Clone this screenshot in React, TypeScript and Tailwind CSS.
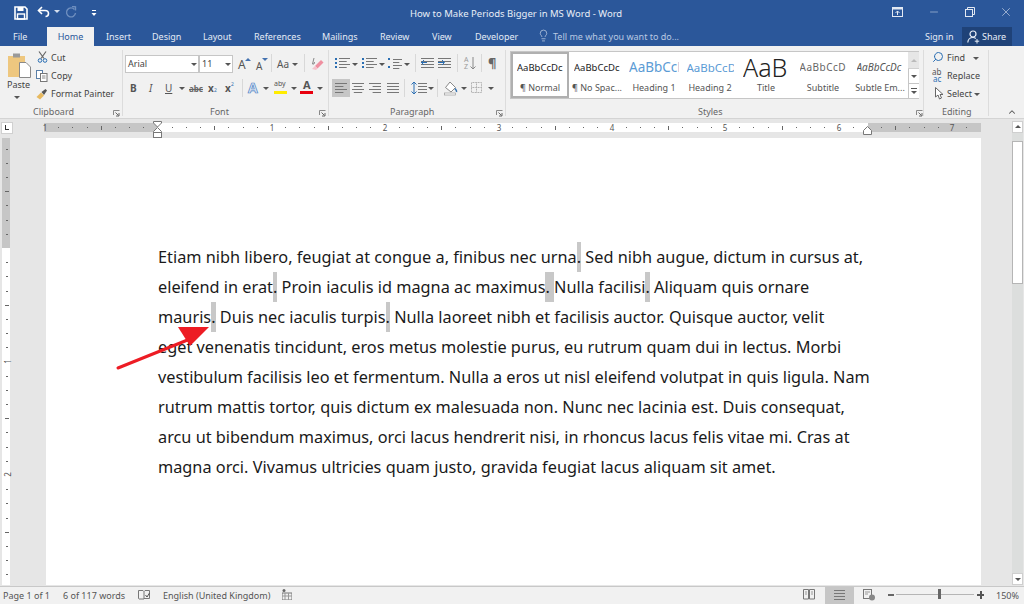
import type { ReactNode } from "react"
import { ChevronUp, Lightbulb, Search, X, Minus } from "lucide-react"

// small drop-down arrow used all over the ribbon
function Caret({ x, y, color = "border-t-[#555]" }: { x: number; y: number; color?: string }) {
  return (
    <span
      className={`absolute w-0 h-0 border-l-[3px] border-r-[3px] border-t-[3px] border-l-transparent border-r-transparent ${color}`}
      style={{ left: x, top: y }}
    />
  )
}

function Label({ x, y, children, className = "text-[#444]" }: { x: number; y: number; children: ReactNode; className?: string }) {
  return (
    <span className={`absolute whitespace-nowrap text-[9px] leading-[12px] ${className}`} style={{ left: x, top: y }}>
      {children}
    </span>
  )
}

function Launcher({ x }: { x: number }) {
  return (
    <svg className="absolute" style={{ left: x, top: 110 }} width="7" height="7" viewBox="0 0 7 7">
      <path d="M0.5 5V0.5H6.5" fill="none" stroke="#888" />
      <path d="M2.5 2.5L5.5 5.5M6 3V6H3" fill="none" stroke="#666" />
    </svg>
  )
}

function Tab({ x, label }: { x: number; label: string }) {
  return (
    <span className="absolute top-[30px] text-[9px] leading-[13px] text-[#e4ebf5] whitespace-nowrap" style={{ left: x }}>
      {label}
    </span>
  )
}

function Lines({ x, y, w, align = "left" }: { x: number; y: number; w: number; align?: "left" | "center" | "right" | "full" }) {
  const rows = [w, w * 0.7, w, w * 0.7]
  return (
    <svg className="absolute" style={{ left: x, top: y }} width={w} height="11" viewBox={`0 0 ${w} 11`}>
      {rows.map((len, i) => {
        const l = align === "full" ? w : len
        const sx = align === "center" || align === "full" ? (w - l) / 2 : align === "right" ? w - l : 0
        return <rect key={i} x={sx} y={i * 3} width={l} height="1" fill="#777" />
      })}
    </svg>
  )
}

function StyleCell({ x, w, sample, name, sampleClass }: { x: number; w: number; sample: string; name: string; sampleClass: string }) {
  return (
    <div className="absolute top-0 h-[44px] w-[56px]" style={{ left: x }}>
      <div className={`mx-auto h-[29px] leading-[29px] overflow-hidden whitespace-nowrap ${sampleClass}`} style={{ width: w }}>{sample}</div>
      <div className="text-center text-[9px] leading-[12px] text-[#555] whitespace-nowrap">{name}</div>
    </div>
  )
}

function HRuler() {
  const marks = []
  const zero = 157.5
  const inch = 113.5
  for (let i = -8; i <= 66; i++) {
    const px = zero + (i * inch) / 8
    if (px < 46 || px > 980) continue
    if (i % 8 === 0) continue
    marks.push(
      <span
        key={i}
        className="absolute bg-[#666] w-px"
        style={{ left: Math.round(px), top: i % 4 === 0 ? 126 : 127, height: i % 4 === 0 ? 4 : 1 }}
      />
    )
  }
  const nums = [
    [44, "1"],
    [271, "1"],
    [384, "2"],
    [498, "3"],
    [611, "4"],
    [724, "5"],
    [838, "6"],
    [951, "7"],
  ] as const
  return (
    <>
      <div className="absolute left-[44px] top-[123px] w-[937px] h-[9px] bg-white" />
      <div className="absolute left-[44px] top-[123px] w-[113px] h-[9px] bg-[#c6c6c6]" />
      <div className="absolute left-[868px] top-[123px] w-[113px] h-[9px] bg-[#c6c6c6]" />
      {marks}
      {nums.map(([x, n], i) => (
        <span key={i} className="absolute top-[122px] w-[6px] -ml-[3px] text-center text-[8px] leading-[11px] text-[#555]" style={{ left: x + 1 }}>
          {n}
        </span>
      ))}
      {/* indent markers */}
      <svg className="absolute left-[152px] top-[120px]" width="11" height="19" viewBox="0 0 11 19">
        <path d="M1.5 1.5H9.5V3L5.5 7L1.5 3Z" fill="#fff" stroke="#777" />
        <path d="M5.5 7.5L9.5 11.5V12.5H1.5V11.5Z" fill="#fff" stroke="#777" />
        <rect x="1.5" y="12.5" width="8" height="5" fill="#fff" stroke="#777" />
      </svg>
      <svg className="absolute left-[862px] top-[126px]" width="11" height="10" viewBox="0 0 11 10">
        <path d="M5.5 0.5L9.5 4.5V8.5H1.5V4.5Z" fill="#fff" stroke="#777" />
      </svg>
    </>
  )
}

function VRuler() {
  const ticks = []
  const zero = 248
  const inch = 113.5
  for (let i = -7; i <= 23; i++) {
    const py = Math.round(zero + (i * inch) / 8)
    if (py > 584 || i % 8 === 0) continue
    const long = i % 4 === 0
    ticks.push(
      <span key={i} className="absolute bg-[#666] h-px" style={{ top: py, left: long ? 5 : 6, width: long ? 4 : 2 }} />
    )
  }
  return (
    <>
      <div className="absolute left-[2px] top-[138px] w-[8px] h-[447px] bg-white" />
      <div className="absolute left-[2px] top-[138px] w-[8px] h-[110px] bg-[#c6c6c6]" />
      {ticks}
      <span className="absolute left-[3px] top-[356px] w-[8px] text-center text-[8px] leading-[11px] text-[#555] -rotate-90">1</span>
      <span className="absolute left-[3px] top-[469px] w-[8px] text-center text-[8px] leading-[11px] text-[#555] -rotate-90">2</span>
    </>
  )
}

function Dot({ wide = false }: { wide?: boolean }) {
  return (
    <span className={`inline-block h-[30px] align-top bg-[#c8c8c8] ${wide ? "whitespace-pre" : ""}`}>{wide ? ". " : "."}</span>
  )
}

export default function App() {
  return (
    <div className="relative w-[1024px] h-[604px] overflow-hidden bg-[#e6e6e6] font-['Open_Sans']">
      {/* Title bar */}
      <div className="absolute inset-x-0 top-0 h-[46px] bg-[#2b579a]" />
      <svg className="absolute left-[14px] top-[6px]" width="14" height="14" viewBox="0 0 14 14">
        <path d="M1 1H11L13 3V13H1Z" fill="none" stroke="#fff" strokeWidth="1.6" />
        <rect x="3.5" y="1" width="6" height="4" fill="#fff" />
        <rect x="3.5" y="8" width="7" height="5" fill="none" stroke="#fff" strokeWidth="1.4" />
      </svg>
      <svg className="absolute left-[37px] top-[6px]" width="13" height="13" viewBox="0 0 13 13">
        <path d="M5 1L1.5 4.5L5 8" fill="none" stroke="#fff" strokeWidth="1.6" />
        <path d="M2 4.5H8C10.5 4.5 11.5 6 11.5 7.5C11.5 9.5 10 10.5 8.5 10.5" fill="none" stroke="#fff" strokeWidth="1.6" />
      </svg>
      <Caret x={54} y={10} color="border-t-[#d5dfee]" />
      <svg className="absolute left-[65px] top-[6px]" width="12" height="13" viewBox="0 0 12 13">
        <path d="M9.5 3.5A4.5 4.5 0 1 0 10.5 7" fill="none" stroke="#6f8fbf" strokeWidth="1.4" />
        <path d="M7 0.5L10.5 0.8V4.5" fill="none" stroke="#6f8fbf" strokeWidth="1.4" />
      </svg>
      <svg className="absolute left-[91px] top-[10px]" width="6" height="7" viewBox="0 0 6 7">
        <rect x="1" y="0" width="4" height="1" fill="#fff" />
        <path d="M0.5 3H5.5L3 6Z" fill="#fff" />
      </svg>
      <div className="absolute left-[410px] top-[7px] text-[9.5px] leading-[14px] text-[#e8eef7] whitespace-nowrap">
        How to Make Periods Bigger in MS Word - Word
      </div>

      {/* Window buttons */}
      <svg className="absolute left-[892px] top-[7px]" width="11" height="10" viewBox="0 0 11 10">
        <rect x="0.5" y="0.5" width="10" height="9" fill="none" stroke="#e3e9f3" />
        <rect x="0.5" y="0.5" width="10" height="2" fill="#e3e9f3" />
        <path d="M5.5 8V4M3.5 6L5.5 4L7.5 6" fill="none" stroke="#e3e9f3" />
      </svg>
      <Minus className="absolute left-[928px] top-[6px] text-[#e3e9f3]" size={12} strokeWidth={1} />
      <svg className="absolute left-[965px] top-[7px]" width="10" height="10" viewBox="0 0 10 10">
        <rect x="0.5" y="2.5" width="7" height="7" fill="none" stroke="#e3e9f3" />
        <path d="M2.5 2.5V0.5H9.5V7.5H7.5" fill="none" stroke="#e3e9f3" />
      </svg>
      <X className="absolute left-[999px] top-[5px] text-[#e3e9f3]" size={14} strokeWidth={1} />

      {/* Tabs */}
      <Tab x={13} label="File" />
      <div className="absolute left-[47px] top-[27px] w-[47px] h-[19px] bg-[#f1f1f1] text-center text-[9px] leading-[19px] text-[#2b579a]">Home</div>
      <Tab x={106} label="Insert" />
      <Tab x={152} label="Design" />
      <Tab x={203} label="Layout" />
      <Tab x={254} label="References" />
      <Tab x={322} label="Mailings" />
      <Tab x={380} label="Review" />
      <Tab x={432} label="View" />
      <Tab x={475} label="Developer" />
      <Lightbulb className="absolute left-[537px] top-[29px] text-[#d5dfee]" size={13} strokeWidth={1.2} />
      <span className="absolute left-[553px] top-[30px] text-[9px] leading-[13px] text-[#b9c9e2] whitespace-nowrap">Tell me what you want to do...</span>
      <Tab x={925} label="Sign in" />
      <div className="absolute left-[962px] top-[27px] w-[50px] h-[19px] bg-[#1f4278]" />
      <svg className="absolute left-[967px] top-[30px]" width="13" height="14" viewBox="0 0 13 14">
        <circle cx="6" cy="4" r="3" fill="none" stroke="#e8eef7" strokeWidth="1.2" />
        <path d="M0.8 12.5C1 9.5 3 7.5 6 7.5C7 7.5 8 7.8 8.8 8.4" fill="none" stroke="#e8eef7" strokeWidth="1.2" />
        <path d="M10 9V13.5M7.8 11.2H12.2" stroke="#e8eef7" />
      </svg>
      <span className="absolute left-[982px] top-[30px] text-[9px] leading-[13px] text-[#e8eef7]">Share</span>

      {/* Ribbon */}
      <div className="absolute inset-x-0 top-[46px] h-[73px] bg-[#f1f1f1] border-b border-[#d4d4d4]" />
      {[122, 328, 505, 923, 988].map((x) => (
        <div key={x} className="absolute top-[50px] w-px h-[66px] bg-[#dcdcdc]" style={{ left: x }} />
      ))}

      {/* Clipboard */}
      <svg className="absolute left-[8px] top-[52px]" width="23" height="26" viewBox="0 0 23 26">
        <rect x="0" y="4" width="17" height="21" fill="#eec77f" />
        <rect x="5" y="1.5" width="7" height="4" fill="#9a9a9a" />
        <path d="M11.5 10.5H18L22.5 15V25.5H11.5Z" fill="#fff" stroke="#8a8a8a" />
      </svg>
      <Label x={7} y={79}>Paste</Label>
      <Caret x={14} y={96} />
      <svg className="absolute left-[37px] top-[51px]" width="11" height="12" viewBox="0 0 11 12">
        <path d="M2 0.5L7 7.5M9 0.5L4 7.5" stroke="#666" strokeWidth="1.2" fill="none" />
        <circle cx="3" cy="9.5" r="1.8" fill="none" stroke="#2b6fb3" />
        <circle cx="8" cy="9.5" r="1.8" fill="none" stroke="#2b6fb3" />
      </svg>
      <Label x={51} y={52}>Cut</Label>
      <svg className="absolute left-[36px] top-[70px]" width="12" height="12" viewBox="0 0 12 12">
        <rect x="0.5" y="0.5" width="6" height="8" fill="#fff" stroke="#5a7fa8" />
        <rect x="4.5" y="3.5" width="6.5" height="8" fill="#fff" stroke="#777" />
        <path d="M6 6H9.5M6 8H9.5" stroke="#888" />
      </svg>
      <Label x={51} y={70}>Copy</Label>
      <svg className="absolute left-[36px] top-[88px]" width="13" height="12" viewBox="0 0 13 12">
        <path d="M0.5 9L5 4.5L8 7.5L4 11.5Z" fill="#e7b95f" />
        <path d="M5.5 4L9.5 1L11 2.5L8 7Z" fill="#555" />
      </svg>
      <Label x={51} y={88}>Format Painter</Label>
      <Label x={33} y={106} className="text-[#666]">Clipboard</Label>
      <Launcher x={113} />

      {/* Font */}
      <div className="absolute left-[125px] top-[55px] w-[74px] h-[18px] bg-white border border-[#c6c6c6] pl-[2px] text-[9px] leading-[16px] text-[#444]">Arial</div>
      <Caret x={191} y={63} />
      <div className="absolute left-[199px] top-[55px] w-[34px] h-[18px] bg-white border border-[#c6c6c6] pl-[2px] text-[9px] leading-[16px] text-[#444]">11</div>
      <Caret x={225} y={63} />
      <span className="absolute left-[238px] top-[58px] text-[12px] leading-[14px] text-[#555] font-['Liberation_Sans']">A</span>
      <Caret x={245} y={58} color="border-t-[#4472b0] rotate-180" />
      <span className="absolute left-[256px] top-[60px] text-[10px] leading-[12px] text-[#555] font-['Liberation_Sans']">A</span>
      <Caret x={262} y={58} color="border-t-[#4472b0]" />
      <div className="absolute left-[271px] top-[54px] w-px h-[18px] bg-[#d8d8d8]" />
      <span className="absolute left-[277px] top-[58px] text-[10px] leading-[13px] text-[#555] font-['Liberation_Sans']">Aa</span>
      <Caret x={292} y={63} />
      <div className="absolute left-[304px] top-[54px] w-px h-[18px] bg-[#d8d8d8]" />
      <svg className="absolute left-[311px] top-[57px]" width="13" height="14" viewBox="0 0 13 14">
        <path d="M3 1L1.5 7H3L3.5 5" fill="none" stroke="#888" />
        <path d="M4 9L10 3L12.5 5.5L6.5 11.5Z" fill="#ef8fa0" />
        <path d="M1 12L4 9L6.5 11.5L5 13Z" fill="#f4c3cc" />
      </svg>
      <span className="absolute left-[130px] top-[82px] text-[10px] leading-[12px] font-bold text-[#555] font-['Liberation_Sans']">B</span>
      <span className="absolute left-[149px] top-[82px] text-[10px] leading-[12px] italic text-[#555] font-['Liberation_Sans']">I</span>
      <span className="absolute left-[165px] top-[82px] text-[10px] leading-[12px] underline text-[#555] font-['Liberation_Sans']">U</span>
      <Caret x={179} y={87} />
      <span className="absolute left-[189px] top-[83px] text-[8px] leading-[11px] font-bold text-[#666] line-through font-['Liberation_Sans']">abc</span>
      <span className="absolute left-[208px] top-[82px] text-[10px] leading-[12px] font-bold text-[#555] font-['Liberation_Sans']">x</span>
      <span className="absolute left-[214px] top-[87px] text-[5px] leading-[6px] text-[#3572b0] font-['Liberation_Sans']">2</span>
      <span className="absolute left-[225px] top-[82px] text-[10px] leading-[12px] font-bold text-[#555] font-['Liberation_Sans']">x</span>
      <span className="absolute left-[231px] top-[81px] text-[5px] leading-[6px] text-[#3572b0] font-['Liberation_Sans']">2</span>
      <div className="absolute left-[242px] top-[79px] w-px h-[18px] bg-[#d8d8d8]" />
      <span className="absolute left-[248px] top-[80px] text-[14px] leading-[15px] font-bold text-[#dbe6f4] [-webkit-text-stroke:0.7px_#4a80c4] font-['Liberation_Sans']">A</span>
      <Caret x={263} y={87} />
      <span className="absolute left-[274px] top-[80px] text-[7px] leading-[8px] text-[#555] font-['Liberation_Sans']">aby</span>
      <div className="absolute left-[274px] top-[91px] w-[13px] h-[3px] bg-[#ffec00]" />
      <Caret x={291} y={87} />
      <span className="absolute left-[303px] top-[79px] text-[11px] leading-[12px] font-bold text-[#555] font-['Liberation_Sans']">A</span>
      <div className="absolute left-[300px] top-[91px] w-[13px] h-[3px] bg-[#e8000f]" />
      <Caret x={317} y={87} />
      <Label x={210} y={106} className="text-[#666]">Font</Label>
      <Launcher x={319} />

      {/* Paragraph */}
      <Lines x={339} y={58} w={11} />
      <span className="absolute left-[335px] top-[58px] w-[2px] h-[2px] bg-[#2b6fb3] shadow-[0_4px_0_#2b6fb3,0_8px_0_#2b6fb3]" />
      <Caret x={352} y={63} />
      <Lines x={366} y={58} w={11} />
      <span className="absolute left-[362px] top-[58px] w-[2px] h-[2px] bg-[#2b6fb3] shadow-[0_4px_0_#2b6fb3,0_8px_0_#2b6fb3]" />
      <Caret x={379} y={63} />
      <Lines x={393} y={59} w={9} />
      <span className="absolute left-[388px] top-[58px] w-[2px] h-[2px] bg-[#2b6fb3] shadow-[0_8px_0_#2b6fb3]" />
      <Caret x={404} y={63} />
      <div className="absolute left-[415px] top-[54px] w-px h-[18px] bg-[#d8d8d8]" />
      <Lines x={421} y={58} w={13} align="full" />
      <svg className="absolute left-[421px] top-[59px]" width="7" height="7" viewBox="0 0 7 7"><path d="M0 3.5H6M3 1L0.5 3.5L3 6" fill="none" stroke="#2b6fb3" /></svg>
      <Lines x={438} y={58} w={13} align="full" />
      <svg className="absolute left-[438px] top-[59px]" width="7" height="7" viewBox="0 0 7 7"><path d="M0 3.5H6M4 1L6.5 3.5L4 6" fill="none" stroke="#2b6fb3" /></svg>
      <div className="absolute left-[457px] top-[54px] w-px h-[18px] bg-[#d8d8d8]" />
      <span className="absolute left-[464px] top-[56px] text-[7px] leading-[7px] text-[#999] font-['Liberation_Sans']">A</span>
      <span className="absolute left-[464px] top-[63px] text-[7px] leading-[7px] text-[#999] font-['Liberation_Sans']">Z</span>
      <svg className="absolute left-[470px] top-[57px]" width="6" height="13" viewBox="0 0 6 13"><path d="M3 0V12M0.5 9.5L3 12L5.5 9.5" fill="none" stroke="#888" /></svg>
      <div className="absolute left-[481px] top-[54px] w-px h-[18px] bg-[#d8d8d8]" />
      <span className="absolute left-[488px] top-[56px] text-[13px] leading-[15px] font-bold text-[#666] font-['Liberation_Sans']">¶</span>
      <div className="absolute left-[332px] top-[79px] w-[18px] h-[18px] bg-[#c6c6c6]" />
      <Lines x={335} y={83} w={12} />
      <Lines x={352} y={83} w={12} align="center" />
      <Lines x={369} y={83} w={12} align="right" />
      <Lines x={387} y={83} w={12} align="full" />
      <div className="absolute left-[404px] top-[79px] w-px h-[18px] bg-[#d8d8d8]" />
      <svg className="absolute left-[411px] top-[81px]" width="6" height="14" viewBox="0 0 6 14"><path d="M3 1V13M0.5 3.5L3 1L5.5 3.5M0.5 10.5L3 13L5.5 10.5" fill="none" stroke="#2b6fb3" /></svg>
      <Lines x={418} y={83} w={9} align="full" />
      <Caret x={428} y={87} />
      <div className="absolute left-[437px] top-[79px] w-px h-[18px] bg-[#d8d8d8]" />
      <svg className="absolute left-[444px] top-[81px]" width="14" height="15" viewBox="0 0 14 15">
        <path d="M6 1L11.5 6.5L7 11L1.5 6.5Z" fill="#fff" stroke="#888" />
        <path d="M11 7.5C12 9 13 9.5 12.5 11" stroke="#3572b0" strokeWidth="1.5" fill="none" />
        <rect x="0.5" y="12" width="11" height="2" fill="#fff" stroke="#999" strokeWidth="0.7" />
      </svg>
      <Caret x={461} y={87} />
      <svg className="absolute left-[471px] top-[82px]" width="11" height="11" viewBox="0 0 11 11">
        <path d="M0.5 0.5H10.5V10.5H0.5ZM5.5 0.5V10.5M0.5 5.5H10.5" fill="none" stroke="#aaa" strokeDasharray="1 0.6" />
      </svg>
      <Caret x={488} y={87} />
      <Label x={390} y={106} className="text-[#666]">Paragraph</Label>
      <Launcher x={496} />

      {/* Styles gallery */}
      <div className="absolute left-[510px] top-[51px] w-[409px] h-[48px] bg-white border border-[#c6c6c6]" />
      <div className="absolute left-[511px] top-[52px] w-[397px] h-[46px]">
        <div className="absolute left-0 top-0 w-[58px] h-[46px] border-[2px] border-[#b0b0b0]" />
        <div className="absolute inset-x-0 top-[1px] h-[44px]">
          <StyleCell x={1} w={46} sample="AaBbCcDc" name="¶ Normal" sampleClass="text-[9.5px] text-[#222] font-['Liberation_Sans']" />
          <StyleCell x={58} w={46} sample="AaBbCcDc" name="¶ No Spac..." sampleClass="text-[9.5px] text-[#222] font-['Liberation_Sans']" />
          <StyleCell x={115} w={50} sample="AaBbCcD" name="Heading 1" sampleClass="text-[13.5px] text-[#5b9bd5] font-['Liberation_Sans']" />
          <StyleCell x={171} w={47} sample="AaBbCcD" name="Heading 2" sampleClass="text-[11.5px] text-[#5b9bd5] font-['Liberation_Sans']" />
          <StyleCell x={227} w={46} sample="AaB" name="Title" sampleClass="text-[25px] font-light text-[#222] font-['Open_Sans']" />
          <StyleCell x={284} w={47} sample="AaBbCcD" name="Subtitle" sampleClass="text-[10px] tracking-[0.5px] text-[#666] font-['Liberation_Sans']" />
          <StyleCell x={341} w={47} sample="AaBbCcDc" name="Subtle Em..." sampleClass="text-[10px] italic text-[#555] font-['Liberation_Sans']" />
        </div>
      </div>
      <div className="absolute left-[908px] top-[52px] w-[11px] h-[46px] flex flex-col">
        <div className="relative h-[17px] bg-[#e6e6e6] border-b border-[#d0d0d0]"><Caret x={3} y={7} color="border-t-[#bbb] rotate-180" /></div>
        <div className="relative h-[15px] bg-white border-l border-[#c6c6c6] border-b"><Caret x={2} y={6} /></div>
        <div className="relative h-[14px] bg-white border-l border-[#c6c6c6]">
          <span className="absolute left-[2px] top-[4px] w-[6px] h-px bg-[#555]" />
          <Caret x={2} y={7} />
        </div>
      </div>
      <Label x={698} y={106} className="text-[#666]">Styles</Label>
      <Launcher x={916} />

      {/* Editing */}
      <Search className="absolute left-[932px] top-[51px] text-[#2b6fb3] -scale-x-100" size={12} strokeWidth={2} />
      <Label x={947} y={52}>Find</Label>
      <Caret x={973} y={57} />
      <span className="absolute left-[932px] top-[68px] text-[8px] leading-[7px] text-[#555] font-['Liberation_Sans']">ab</span>
      <span className="absolute left-[933px] top-[75px] text-[8px] leading-[7px] text-[#2b6fb3] font-['Liberation_Sans']">ac</span>
      <Label x={947} y={70}>Replace</Label>
      <svg className="absolute left-[935px] top-[87px]" width="9" height="13" viewBox="0 0 9 13">
        <path d="M0.5 0.5V10L3 8L4.5 12L6.5 11L5 7.5H8Z" fill="#fff" stroke="#666" />
      </svg>
      <Label x={947} y={88}>Select</Label>
      <Caret x={974} y={93} />
      <Label x={942} y={106} className="text-[#666]">Editing</Label>
      <ChevronUp className="absolute left-[1007px] top-[107px] text-[#555]" size={10} strokeWidth={2.5} />

      {/* Rulers */}
      <div className="absolute left-[1px] top-[122px] w-[12px] h-[12px] bg-white border border-[#d0d0d0]">
        <span className="absolute left-[3px] top-[2px] w-[4px] h-[5px] border-l border-b border-[#333]" />
      </div>
      <HRuler />
      <VRuler />

      {/* Document page */}
      <div className="absolute left-[46px] top-[138px] w-[935px] h-[447px] bg-white text-[16.3px] leading-[30px] text-[#1a1a1a] font-['Liberation_Sans']">
        <div className="absolute left-[112px] top-[104px] whitespace-nowrap">
          <div>Etiam nibh libero, feugiat at congue a, finibus nec urna<Dot /> Sed nibh augue, dictum in cursus at,</div>
          <div>eleifend in erat<Dot /> Proin iaculis id magna ac maximus<Dot wide />Nulla facilisi<Dot /> Aliquam quis ornare</div>
          <div>mauris<Dot /> Duis nec iaculis turpis<Dot /> Nulla laoreet nibh et facilisis auctor. Quisque auctor, velit</div>
          <div>eget venenatis tincidunt, eros metus molestie purus, eu rutrum quam dui in lectus. Morbi</div>
          <div>vestibulum facilisis leo et fermentum. Nulla a eros ut nisl eleifend volutpat in quis ligula. Nam</div>
          <div>rutrum mattis tortor, quis dictum ex malesuada non. Nunc nec lacinia est. Duis consequat,</div>
          <div>arcu ut bibendum maximus, orci lacus hendrerit nisi, in rhoncus lacus felis vitae mi. Cras at</div>
          <div>magna orci. Vivamus ultricies quam justo, gravida feugiat lacus aliquam sit amet.</div>
        </div>
      </div>

      {/* Annotation arrow */}
      <svg className="absolute left-[110px] top-[320px]" width="110" height="55" viewBox="0 0 110 55">
        <path d="M8 48L80 19" stroke="#ed1c24" strokeWidth="3" strokeLinecap="round" />
        <path d="M68 7L99 7L80 26Z" fill="#ed1c24" />
      </svg>

      {/* Scrollbar */}
      <div className="absolute left-[1012px] top-[133px] w-[11px] h-[452px] bg-[#dcdedd]" />
      <div className="absolute left-[1012px] top-[121px] w-[11px] h-[12px] bg-white border border-[#cfcfcf]"><Caret x={2} y={3} color="border-t-[#555] rotate-180" /></div>
      <div className="absolute left-[1012px] top-[141px] w-[11px] h-[143px] bg-white border border-[#b5b5b5]" />
      <div className="absolute left-[1012px] top-[573px] w-[11px] h-[12px] bg-white border border-[#cfcfcf]"><Caret x={2} y={4} /></div>

      {/* Status bar */}
      <div className="absolute inset-x-0 top-[586px] h-[18px] bg-[#f1f1f1] border-t border-[#c8c8c8] text-[9px] leading-[17px] text-[#555]">
        <span className="absolute left-[3px] top-0">Page 1 of 1</span>
        <span className="absolute left-[63px] top-0">6 of 117 words</span>
        <span className="absolute left-[163px] top-0">English (United Kingdom)</span>
      </div>
      <svg className="absolute left-[138px] top-[589px]" width="12" height="11" viewBox="0 0 12 11">
        <path d="M0.5 1.5H5L6 2.5V10H1L0.5 9.5ZM6 2.5L7 1.5H11.5V9.5H6" fill="none" stroke="#777" />
        <path d="M7.5 6L9 8L11.5 4" fill="none" stroke="#555" />
      </svg>
      <svg className="absolute left-[282px] top-[589px]" width="10" height="11" viewBox="0 0 10 11">
        <circle cx="2" cy="1.5" r="1.5" fill="#666" />
        <rect x="0" y="4" width="10" height="7" fill="none" stroke="#777" />
        <path d="M0 7H10M3 4V11M6.5 4V11" stroke="#999" />
      </svg>
      <svg className="absolute left-[803px] top-[588px]" width="12" height="12" viewBox="0 0 12 12">
        <path d="M0.5 1.5H5.5V11H0.5ZM6.5 1.5H11.5V11H6.5Z" fill="none" stroke="#777" />
        <path d="M2 4H4M2 6H4M8 4H10M8 6H10" stroke="#999" />
      </svg>
      <div className="absolute left-[825px] top-[587px] w-[29px] h-[17px] bg-[#c6c6c6]" />
      <Lines x={834} y={590} w={11} align="full" />
      <svg className="absolute left-[863px] top-[589px]" width="13" height="12" viewBox="0 0 13 12">
        <rect x="0.5" y="0.5" width="8" height="9" fill="none" stroke="#777" />
        <path d="M2 3H7M2 5H5" stroke="#999" />
        <circle cx="9" cy="8.5" r="3" fill="#888" />
      </svg>
      <span className="absolute left-[888px] top-[594px] w-[6px] h-[2px] bg-[#666]" />
      <div className="absolute left-[896px] top-[594px] w-[78px] h-px bg-[#b5b5b5]" />
      <span className="absolute left-[938px] top-[589px] w-[3px] h-[10px] bg-[#666]" />
      <span className="absolute left-[977px] top-[594px] w-[7px] h-[2px] bg-[#555]" />
      <span className="absolute left-[980px] top-[591px] w-[2px] h-[8px] bg-[#555]" />
      <span className="absolute left-[996px] top-[587px] text-[9px] leading-[17px] text-[#555]">150%</span>
    </div>
  )
}
